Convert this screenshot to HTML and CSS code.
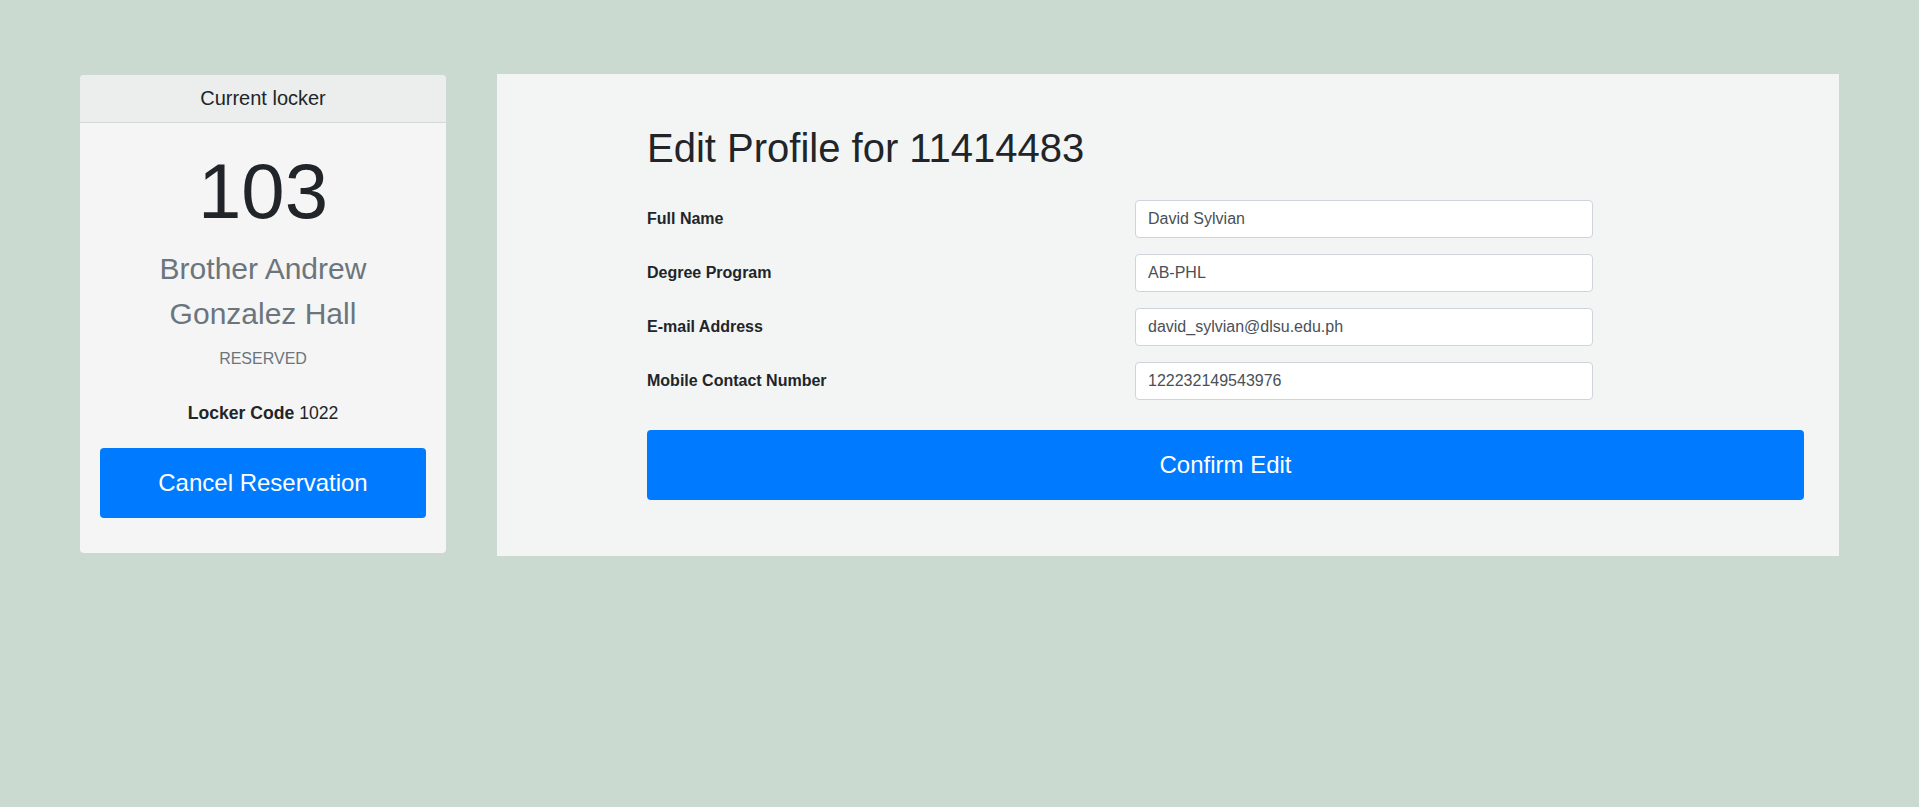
FILE: index.html
```html
<!DOCTYPE html>
<html lang="en">
<head>
<meta charset="utf-8">
<title>Edit Profile</title>
<link rel="stylesheet" href="styles.css">
</head>
<body>
<div class="page">
  <aside class="card">
    <div class="card-header">Current locker</div>
    <div class="card-body">
      <div class="locker-number">103</div>
      <div class="locker-building">Brother Andrew<br>Gonzalez Hall</div>
      <div class="locker-status">RESERVED</div>
      <div class="locker-code"><strong>Locker Code</strong> 1022</div>
      <button class="btn btn-cancel" type="button">Cancel Reservation</button>
    </div>
  </aside>
  <main class="panel">
    <h1 class="title">Edit Profile for 11414483</h1>
    <form class="form">
      <div class="form-row">
        <label class="form-label" for="fullname">Full Name</label>
        <input class="form-control" id="fullname" type="text" value="David Sylvian">
      </div>
      <div class="form-row">
        <label class="form-label" for="degree">Degree Program</label>
        <input class="form-control" id="degree" type="text" value="AB-PHL">
      </div>
      <div class="form-row">
        <label class="form-label" for="email">E-mail Address</label>
        <input class="form-control" id="email" type="text" value="david_sylvian@dlsu.edu.ph">
      </div>
      <div class="form-row">
        <label class="form-label" for="mobile">Mobile Contact Number</label>
        <input class="form-control" id="mobile" type="text" value="122232149543976">
      </div>
      <button class="btn btn-confirm" type="button">Confirm Edit</button>
    </form>
  </main>
</div>
</body>
</html>
```
FILE: styles.css
```css
* { box-sizing: border-box; }
html, body {
  margin: 0;
  padding: 0;
  background: #cbdad1;
  font-family: "Liberation Sans", Arial, sans-serif;
  color: #212529;
}
.page {
  display: flex;
  align-items: flex-start;
  gap: 51px;
  padding: 74px 80px 0 80px;
}
.card {
  width: 366px;
  flex: 0 0 366px;
  margin-top: 1px;
  background: #f4f5f4;
  border-radius: 4px;
  overflow: hidden;
}
.card-header {
  height: 48px;
  line-height: 47px;
  text-align: center;
  font-size: 20px;
  background: #eceeed;
  border-bottom: 1px solid #d4d7d6;
  color: #212529;
}
.card-body {
  padding: 29px 20px 35px;
  text-align: center;
  display: flex;
  flex-direction: column;
  align-items: stretch;
}
.locker-number {
  font-size: 78px;
  line-height: 78px;
  color: #212529;
}
.locker-building {
  margin-top: 16px;
  font-size: 30px;
  line-height: 45px;
  color: #6c757d;
}
.locker-status {
  margin-top: 11px;
  font-size: 16px;
  line-height: 24px;
  color: #6c757d;
}
.locker-code {
  margin-top: 29px;
  font-size: 17.6px;
  line-height: 26px;
  color: #212529;
}
.btn {
  display: block;
  border: none;
  border-radius: 4px;
  background: #007bff;
  color: #fff;
  font-family: "Liberation Sans", Arial, sans-serif;
  font-size: 24px;
  height: 70px;
  cursor: pointer;
}
.btn-cancel {
  margin-top: 22px;
  width: 100%;
}
.panel {
  flex: 1 1 auto;
  background: #f3f5f4;
  padding: 50px 35px 56px 150px;
}
.title {
  margin: 0 0 28px;
  font-size: 40px;
  line-height: 48px;
  font-weight: 400;
  color: #212529;
}
.form {
  display: flex;
  flex-direction: column;
  gap: 16px;
}
.form-row {
  display: grid;
  grid-template-columns: 488px 458px;
  align-items: center;
}
.form-label {
  font-size: 16px;
  font-weight: 700;
  color: #212529;
}
.form-control {
  height: 38px;
  padding: 0 12px;
  border: 1px solid #ced4da;
  border-radius: 4px;
  background: #fff;
  font-family: "Liberation Sans", Arial, sans-serif;
  font-size: 16px;
  color: #495057;
}
.btn-confirm {
  margin-top: 14px;
  width: 100%;
}
```
